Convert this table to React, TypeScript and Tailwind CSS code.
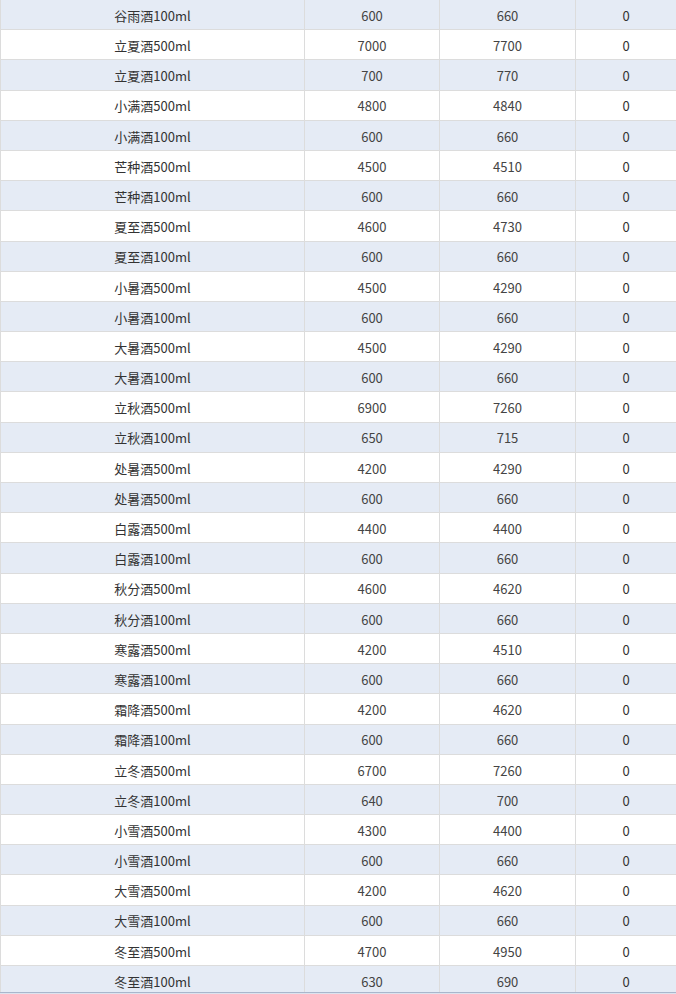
import React from "react";

const rows: [string, string, string, string][] = [
  ["谷雨酒100ml", "600", "660", "0"],
  ["立夏酒500ml", "7000", "7700", "0"],
  ["立夏酒100ml", "700", "770", "0"],
  ["小满酒500ml", "4800", "4840", "0"],
  ["小满酒100ml", "600", "660", "0"],
  ["芒种酒500ml", "4500", "4510", "0"],
  ["芒种酒100ml", "600", "660", "0"],
  ["夏至酒500ml", "4600", "4730", "0"],
  ["夏至酒100ml", "600", "660", "0"],
  ["小暑酒500ml", "4500", "4290", "0"],
  ["小暑酒100ml", "600", "660", "0"],
  ["大暑酒500ml", "4500", "4290", "0"],
  ["大暑酒100ml", "600", "660", "0"],
  ["立秋酒500ml", "6900", "7260", "0"],
  ["立秋酒100ml", "650", "715", "0"],
  ["处暑酒500ml", "4200", "4290", "0"],
  ["处暑酒500ml", "600", "660", "0"],
  ["白露酒500ml", "4400", "4400", "0"],
  ["白露酒100ml", "600", "660", "0"],
  ["秋分酒500ml", "4600", "4620", "0"],
  ["秋分酒100ml", "600", "660", "0"],
  ["寒露酒500ml", "4200", "4510", "0"],
  ["寒露酒100ml", "600", "660", "0"],
  ["霜降酒500ml", "4200", "4620", "0"],
  ["霜降酒100ml", "600", "660", "0"],
  ["立冬酒500ml", "6700", "7260", "0"],
  ["立冬酒100ml", "640", "700", "0"],
  ["小雪酒500ml", "4300", "4400", "0"],
  ["小雪酒100ml", "600", "660", "0"],
  ["大雪酒500ml", "4200", "4620", "0"],
  ["大雪酒100ml", "600", "660", "0"],
  ["冬至酒500ml", "4700", "4950", "0"],
  ["冬至酒100ml", "630", "690", "0"],
];

export default function App() {
  return (
    <div
      className="w-[676px] h-[994px] bg-white overflow-hidden"
      style={{ fontFamily: '"Noto Sans CJK SC", "Noto Sans", sans-serif' }}
    >
      <div className="h-[992px] overflow-hidden border-l border-[#dcdcdc]">
        {rows.map((r, i) => (
          <div
            key={i}
            className={`grid grid-cols-[304px_135px_136px_1fr] h-[30.19px] border-b border-[#dcdcdc] text-[13px] ${
              i % 2 === 0 ? "bg-[#e5ebf5]" : "bg-white"
            }`}
          >
            <div className="flex items-center justify-center pt-[2px] border-r border-[#dcdcdc] text-[#333]">
              {r[0]}
            </div>
            <div className="flex items-center justify-center pt-[2px] border-r border-[#dcdcdc] text-[#444]">
              {r[1]}
            </div>
            <div className="flex items-center justify-center pt-[2px] border-r border-[#dcdcdc] text-[#444]">
              {r[2]}
            </div>
            <div className="flex items-center justify-center pt-[2px] text-[#333]">
              {r[3]}
            </div>
          </div>
        ))}
      </div>
      <div className="h-[1px] bg-[#a9b6cc]" />
      <div className="h-[1px] bg-[#dde3ee]" />
    </div>
  );
}
